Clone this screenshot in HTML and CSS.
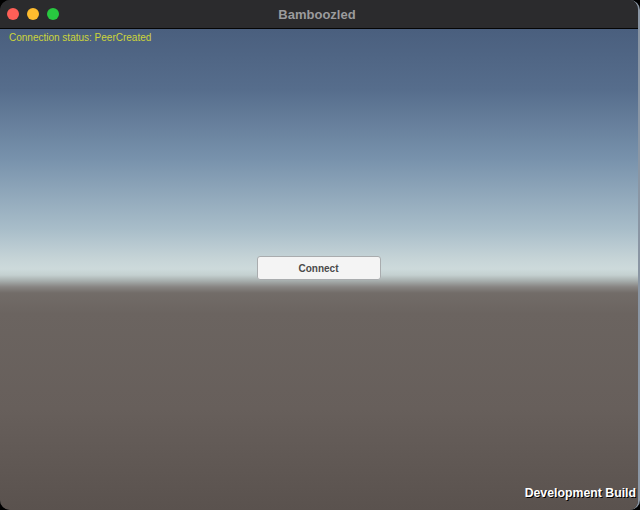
FILE: index.html
```html
<!DOCTYPE html>
<html>
<head>
<meta charset="utf-8">
<title>Bamboozled</title>
<link rel="stylesheet" href="styles.css">
</head>
<body>
<div class="window">
  <div class="titlebar">
    <div class="lights">
      <span class="light red"></span>
      <span class="light yellow"></span>
      <span class="light green"></span>
    </div>
    <div class="title">Bamboozled</div>
  </div>
  <div class="scene">
    <div class="status">Connection status: PeerCreated</div>
    <button class="connect">Connect</button>
    <div class="devbuild">Development Build</div>
  </div>
</div>
</body>
</html>
```
FILE: styles.css
```css
html, body {
  margin: 0;
  padding: 0;
  background: #000;
}
body {
  width: 640px;
  height: 510px;
  overflow: hidden;
}
.window {
  width: 640px;
  height: 510px;
  display: flex;
  flex-direction: column;
  border-radius: 10px 10px 10px 10px;
  overflow: hidden;
  box-sizing: border-box;
  border-right: 2px solid #8a96a4;
  background: #2b2b2d;
}
.titlebar {
  height: 28px;
  flex: 0 0 28px;
  background: #2b2b2d;
  border-bottom: 1px solid #050505;
  display: flex;
  align-items: center;
  position: relative;
}
.lights {
  display: flex;
  gap: 8px;
  padding-left: 7px;
}
.light {
  width: 12px;
  height: 12px;
  border-radius: 50%;
  display: block;
}
.red { background: #fe5f57; }
.yellow { background: #febc2e; }
.green { background: #28c840; }
.title {
  flex: 1;
  text-align: center;
  margin-right: 64px;
  font-family: "Liberation Sans", Arial, sans-serif;
  font-weight: bold;
  font-size: 13px;
  color: #9b9b9d;
  padding-left: 1px;
}
.scene {
  flex: 1;
  display: flex;
  flex-direction: column;
  align-items: flex-start;
  padding: 3px 0 10px 9px;
  background: linear-gradient(to bottom,
    #4a5f7e 0px,
    #566d8c 60px,
    #7892ac 130px,
    #a8bdc9 200px,
    #c6d4d7 230px,
    #cddadb 240px,
    #c4d0d0 246px,
    #a6adac 252px,
    #878482 258px,
    #726c68 264px,
    #6b6460 285px,
    #675f5b 380px,
    #5a524e 481px);
}
.status {
  font-family: "Liberation Sans", Arial, sans-serif;
  font-size: 10px;
  line-height: 12px;
  color: #cdd53a;
}
.connect {
  align-self: center;
  margin-top: 212px;
  margin-left: -10px;
  width: 124px;
  height: 24px;
  background: #f4f4f4;
  border: 1px solid #a9acae;
  border-radius: 3px;
  font-family: "Liberation Sans", Arial, sans-serif;
  font-weight: bold;
  font-size: 10px;
  color: #4a4a4a;
  padding: 0;
}
.devbuild {
  margin-top: auto;
  align-self: flex-end;
  margin-right: 2px;
  font-family: "Liberation Sans", Arial, sans-serif;
  font-weight: bold;
  font-size: 12.3px;
  line-height: 14px;
  color: #fff;
  text-shadow: 1px 1px 0 #000;
}
```
